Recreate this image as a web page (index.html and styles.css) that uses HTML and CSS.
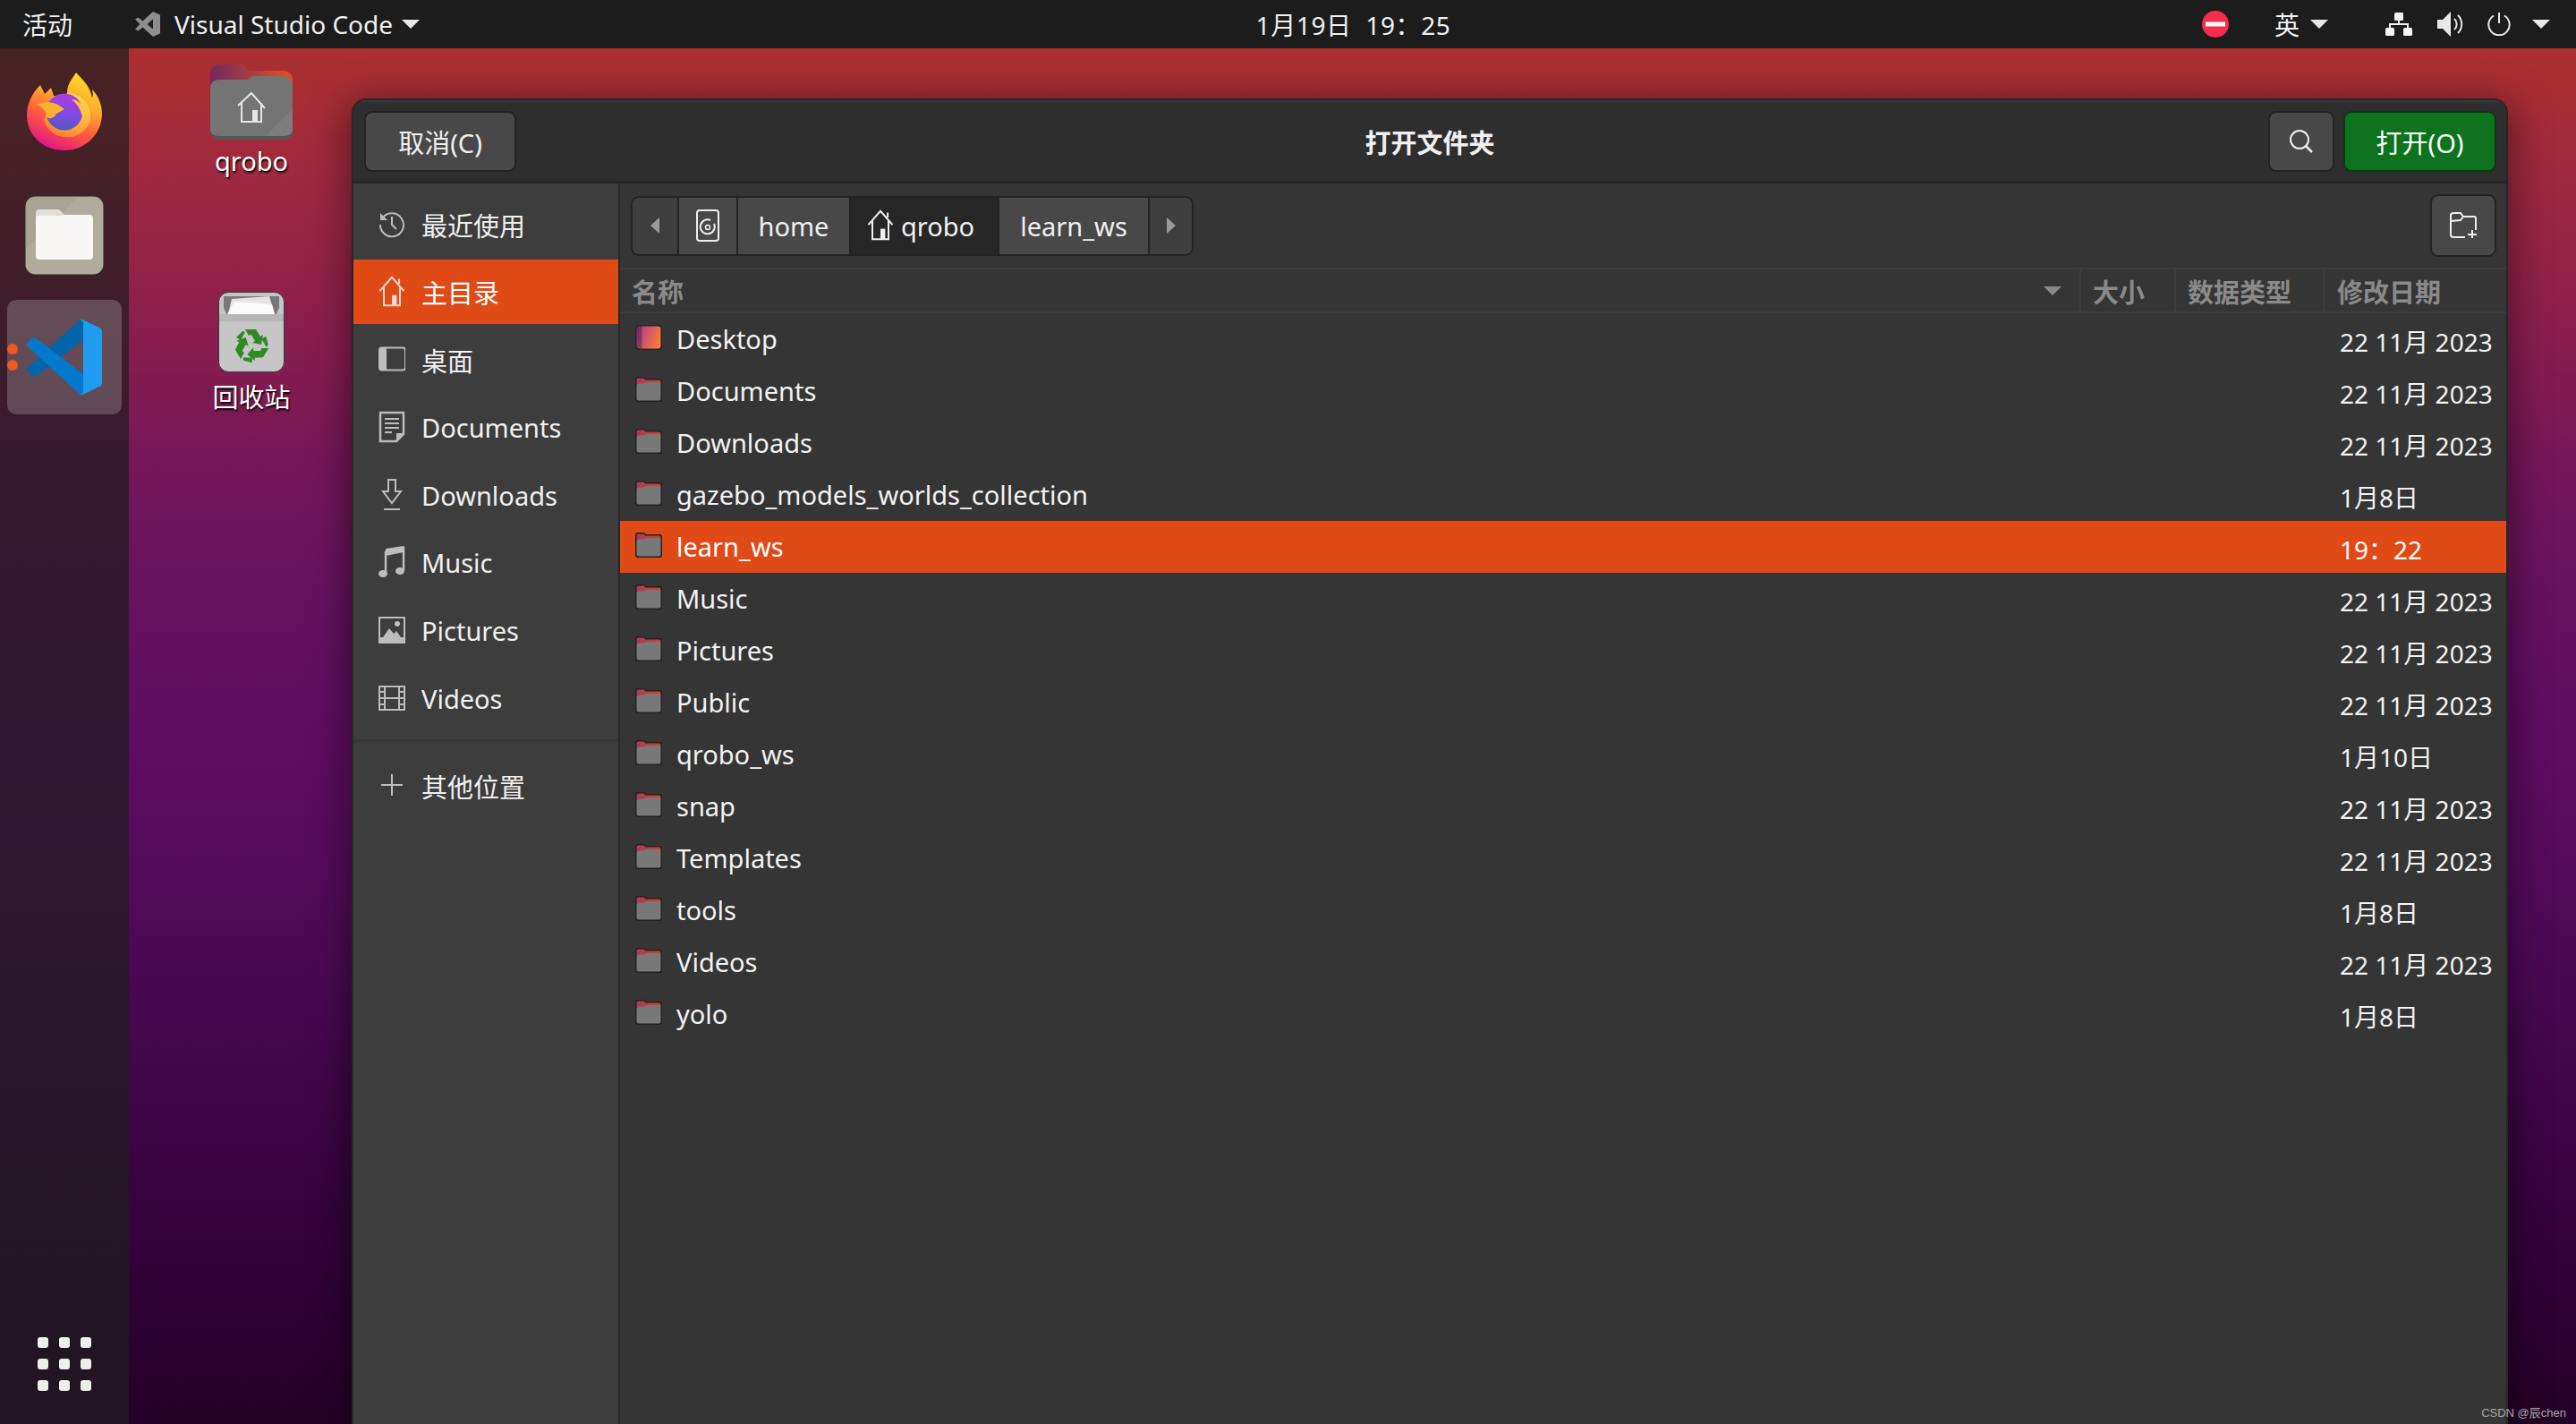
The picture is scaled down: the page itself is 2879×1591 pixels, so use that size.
FILE: index.html
```html
<!DOCTYPE html>
<html lang="zh">
<head>
<meta charset="utf-8">
<title>打开文件夹</title>
<link rel="stylesheet" href="styles.css">
</head>
<body>
<svg class="defs" width="0" height="0" aria-hidden="true">
  <defs>
    <linearGradient id="deskGrad" x1="0" y1="0" x2="1" y2="0.4"><stop offset="0" stop-color="#a8369a"/><stop offset="1" stop-color="#f5763a"/></linearGradient>
    <linearGradient id="folderTop" x1="0" y1="0" x2="1" y2="0"><stop offset="0" stop-color="#a93a5a"/><stop offset="1" stop-color="#cf4522"/></linearGradient>
    <linearGradient id="ffBase" x1="0.8" y1="0" x2="0.35" y2="1"><stop offset="0" stop-color="#ffe226"/><stop offset="0.38" stop-color="#ffa92e"/><stop offset="0.65" stop-color="#ff5f3a"/><stop offset="1" stop-color="#e31587"/></linearGradient>
    <linearGradient id="ffGlobe" x1="0.6" y1="0" x2="0.4" y2="1"><stop offset="0" stop-color="#b03ae0"/><stop offset="0.6" stop-color="#7a4ce0"/><stop offset="1" stop-color="#4a5ac0"/></linearGradient>
    <linearGradient id="ffInner" x1="0.9" y1="0" x2="0.2" y2="1"><stop offset="0" stop-color="#ffe04a"/><stop offset="1" stop-color="#ff7a30"/></linearGradient>
    <symbol id="folder" viewBox="0 0 30 30">
      <path d="M0 4a3 3 0 0 1 3-3h7l2 2h15a3 3 0 0 1 3 3v20a3 3 0 0 1-3 3H3a3 3 0 0 1-3-3z" fill="#222"/>
      <path d="M1.500 9V4.500a2 2 0 0 1 2-2h6l2 2h15a2 2 0 0 1 2 2V9z" fill="url(#folderTop)"/>
      <path d="M1.500 10.500a2 2 0 0 1 2-2h6l3-1.500h14a2 2 0 0 1 2 2v16.500a2 2 0 0 1-2 2H3.500a2 2 0 0 1-2-2z" fill="#787878"/>
    </symbol>
    <symbol id="deskicon" viewBox="0 0 30 30">
      <rect x="0" y="1" width="30" height="28" rx="4" fill="#242424"/>
      <rect x="1.500" y="2.500" width="27" height="25" rx="3" fill="url(#deskGrad)"/>
      <rect x="1.500" y="2.500" width="6" height="25" fill="#000" opacity=".28"/>
    </symbol>
    <symbol id="home" viewBox="0 0 32 40">
      <path d="M1 19 16 2l15 17M6 14v23h20V14M25 4v6" fill="none" stroke="currentColor" stroke-width="2.200"/>
      <rect x="16" y="24" width="6" height="13" fill="currentColor"/>
    </symbol>
    <symbol id="vscode" viewBox="0 0 100 100">
      <path d="M96.460 10.800 75.860.880a6.230 6.230 0 0 0-7.110 1.200L1.300 63.580a4.170 4.170 0 0 0 0 6.160l5.510 5.010a4.170 4.170 0 0 0 5.320.240L93.360 13.370c2.730-2.070 6.640-.120 6.640 3.300v-.240a6.250 6.250 0 0 0-3.540-5.630z" fill="#0065a9"/>
      <path d="M96.460 89.200 75.860 99.120a6.230 6.230 0 0 1-7.110-1.200L1.300 36.420a4.170 4.170 0 0 1 0-6.160l5.510-5.010a4.170 4.170 0 0 1 5.320-.240l81.230 61.620c2.730 2.070 6.640.120 6.640-3.300v.240a6.250 6.250 0 0 1-3.540 5.630z" fill="#007acc"/>
      <path d="M75.860 99.130a6.240 6.240 0 0 1-7.110-1.210c2.310 2.310 6.250.670 6.250-2.590V4.670c0-3.260-3.940-4.890-6.250-2.590a6.240 6.240 0 0 1 7.110-1.210l20.600 9.910A6.250 6.250 0 0 1 100 16.410v67.180a6.250 6.250 0 0 1-3.540 5.630z" fill="#1f9cf0"/>
    </symbol>
    <symbol id="caret" viewBox="0 0 20 10"><path d="M0 0h20L10 10z" fill="currentColor"/></symbol>
  </defs>
</svg>

<header class="topbar">
  <div class="top-left">
    <span class="activities">活动</span>
    <span class="app-menu">
      <svg class="app-glyph" viewBox="0 0 28 28"><path d="M20 0l8 3.500v21L20 28 8.500 17.500 3.500 21.500 0 19.500 5.500 14 0 8.500 3.500 6.500l5 4zM20 8.500l-6.500 5.500 6.500 5.500z" fill="#8d8d8d"/></svg>
      <span>Visual Studio Code</span>
      <svg class="caret"><use href="#caret"/></svg>
    </span>
  </div>
  <div class="clock">1月19日&nbsp; 19：25</div>
  <div class="top-right">
    <svg class="dnd" viewBox="0 0 30 30"><circle cx="15" cy="15" r="15" fill="#f52f4b"/><rect x="4" y="12.500" width="22" height="5" fill="#fff"/></svg>
    <span class="ime">英</span>
    <svg class="caret ime-caret"><use href="#caret"/></svg>
    <svg class="net" viewBox="0 0 30 26"><g fill="#f4f4f4"><rect x="10" y="0" width="10" height="9" rx="1.500"/><rect x="0" y="17" width="10" height="9" rx="1.500"/><rect x="20" y="17" width="10" height="9" rx="1.500"/></g><path d="M15 8v5M5 18v-5h20v5" fill="none" stroke="#f4f4f4" stroke-width="2"/></svg>
    <svg class="vol" viewBox="0 0 29 30"><path d="M0 10h6l9-9v28l-9-9H0z" fill="#e8e8e8"/><path d="M19 9a8 8 0 0 1 0 12M23 5a14 14 0 0 1 0 20" fill="none" stroke="#e8e8e8" stroke-width="2"/></svg>
    <svg class="pow" viewBox="0 0 26 26"><path d="M13 0v12M7 3.500a11.700 11.700 0 1 0 12 0" fill="none" stroke="#e8e8e8" stroke-width="2"/></svg>
    <svg class="caret last-caret"><use href="#caret"/></svg>
  </div>
</header>

<div class="screen">
  <nav class="dock">
    <div class="dock-apps">
      <div class="dock-item">
        <svg class="firefox" viewBox="0 0 84 87">
          <path d="M15 14C5 24 0 36 0 48c0 22 18 39 42 39s42-19 42-41c0-10-4-20-11-27 1 5 1 7 0 9C70 14 62 8 55 0c-5 8-11 14-10 26H30l-3-9-7 7z" fill="url(#ffBase)"/>
          <path d="M45 23c16 0 27 13 26 28-2 15-18 25-35 20-9-3-15-10-17-19z" fill="url(#ffInner)"/>
          <circle cx="42" cy="44" r="20.500" fill="url(#ffGlobe)"/>
          <path d="M11 36c9-4 20-5 31 5-3 2-5 3-9 5-2 5-8 7-12 3 2-5-2-9-10-13z" fill="#ffb02e"/>
          <path d="M50 30c11 1 18 12 13 24-2-12-6-18-13-24z" fill="#ffc83a"/>
        </svg>
      </div>
      <div class="dock-item">
        <svg class="files" viewBox="0 0 90 90">
          <rect x="0.500" y="0.500" width="89" height="89" rx="12" fill="#2c2a24"/>
          <rect x="1.500" y="1.500" width="87" height="87" rx="11" fill="#a8a392"/>
          <path d="M2 60 60 2h17a11 11 0 0 1 11 11v64a11 11 0 0 1-11 11H13A11 11 0 0 1 2 77z" fill="#b0ab9a"/>
          <path d="M13 20a4 4 0 0 1 4-4h22l6 6v20H13z" fill="#e2dfd6"/>
          <path d="M13 26a3 3 0 0 1 3-3h25l5-1h27a4 4 0 0 1 4 4v42a4 4 0 0 1-4 4H17a4 4 0 0 1-4-4z" fill="#f8f7f5"/>
        </svg>
      </div>
      <div class="dock-item active">
        <span class="run-dots"><i></i><i></i></span>
        <svg class="vs"><use href="#vscode"/></svg>
      </div>
    </div>
    <div class="app-grid"><i></i><i></i><i></i><i></i><i></i><i></i><i></i><i></i><i></i></div>
  </nav>

  <main class="desktop">
    <div class="desk-icon desk-home">
      <svg class="big-folder" viewBox="0 0 92 84">
        <defs><linearGradient id="bigTop" x1="0" y1="0" x2="1" y2="0"><stop offset="0" stop-color="#6f2a63"/><stop offset="1" stop-color="#e0521f"/></linearGradient></defs>
        <path d="M0 10a10 10 0 0 1 10-10h27l6 7h39a10 10 0 0 1 10 10v20H0z" fill="url(#bigTop)"/>
        <path d="M0 26a9 9 0 0 1 9-9h32l7-4h34a10 10 0 0 1 10 10v51a10 10 0 0 1-10 10H10A10 10 0 0 1 0 74z" fill="#747474"/>
        <path d="M92 50v24a10 10 0 0 1-10 10H58z" fill="#7d7d7d"/>
        <path d="M0 76a10 8 0 0 0 10 8h72a10 8 0 0 0 10-8v-2a10 6 0 0 1-10 6H10A10 6 0 0 1 0 74z" fill="#555"/>
        <g fill="none" stroke="#e6e6e6" stroke-width="2"><path d="M31 46l15-14 15 17M35 43v21h22V43"/></g>
        <rect x="47" y="51" width="6" height="13" fill="#e6e6e6"/>
      </svg>
      <span class="desk-label">qrobo</span>
    </div>
    <div class="desk-icon desk-trash">
      <svg class="trash" viewBox="0 0 74 90">
        <rect x="0.500" y="0.500" width="73" height="89" rx="11" fill="#c6c6c6" stroke="#3a3a3a"/>
        <path d="M6 5h62v13l-3 7H9L6 18z" fill="#787878"/>
        <path d="M11 25l4-17 42-3 6 20z" fill="#e4e4e4"/>
        <path d="M10 25l8-14 42 3 3 11z" fill="#fbfbfb"/>
        <rect x="1" y="25" width="72" height="8" fill="#b6b6b6"/>
        <g fill="#2e8a22" transform="translate(37 60)">
          <path id="recycleArm" d="M-7-18H5l5 8 3-2-2 11-10-2 3-2-4-7-3 1zM-10-16l3 1-5 9-5-3z"/>
          <use href="#recycleArm" transform="rotate(120)"/>
          <use href="#recycleArm" transform="rotate(240)"/>
        </g>
      </svg>
      <span class="desk-label">回收站</span>
    </div>

    <section class="window">
      <div class="win-header">
        <button class="btn cancel">取消(C)</button>
        <h1 class="win-title">打开文件夹</h1>
        <button class="btn search"><svg viewBox="0 0 28 28" class="ico28"><circle cx="12" cy="12" r="10" fill="none" stroke="#eee" stroke-width="2"/><path d="M19 19l7 7" stroke="#eee" stroke-width="2.500"/></svg></button>
        <button class="btn open">打开(O)</button>
      </div>
      <div class="win-body">
        <aside class="sidebar">
          <ul class="places">
            <li class="place"><svg class="pi" viewBox="0 0 30 30"><g fill="none" stroke="#bdbdbd" stroke-width="2"><path d="M5 8a13 13 0 1 1-3 8"/><path d="M15 7v9l5 5"/></g><path d="M2 3v8h8z" fill="#bdbdbd"/></svg><span>最近使用</span></li>
            <li class="place selected"><svg class="pi home-ico"><use href="#home"/></svg><span>主目录</span></li>
            <li class="place"><svg class="pi" viewBox="0 0 30 30"><rect x="1" y="2.500" width="29" height="25" rx="3" fill="none" stroke="#bdbdbd" stroke-width="2"/><path d="M1 5a3 3 0 0 1 3-3h5v26H4a3 3 0 0 1-3-3z" fill="#bdbdbd"/></svg><span>桌面</span></li>
            <li class="place"><svg class="pi" viewBox="0 0 30 36"><path d="M2 2h26v24l-8 8H2z" fill="none" stroke="#bdbdbd" stroke-width="2.500"/><path d="M7 9h16M7 14h16M7 19h16M7 24h8" stroke="#bdbdbd" stroke-width="2"/><path d="M20 34v-9h8z" fill="#bdbdbd"/></svg><span>Documents</span></li>
            <li class="place"><svg class="pi" viewBox="0 0 30 36"><path d="M11 1h8v13h6L15 27 5 14h6z" fill="none" stroke="#bdbdbd" stroke-width="2"/><path d="M6 34h18" stroke="#bdbdbd" stroke-width="2"/></svg><span>Downloads</span></li>
            <li class="place"><svg class="pi" viewBox="0 0 30 36"><path d="M8 30V7l20-5v25" fill="none" stroke="#bdbdbd" stroke-width="2.500"/><path d="M8 3l20-3v7L8 11z" fill="#bdbdbd"/><ellipse cx="5" cy="31" rx="5" ry="4" fill="#bdbdbd"/><ellipse cx="24" cy="28" rx="5" ry="4" fill="#bdbdbd"/></svg><span>Music</span></li>
            <li class="place"><svg class="pi" viewBox="0 0 30 30"><rect x="1" y="1" width="28" height="28" fill="none" stroke="#bdbdbd" stroke-width="2"/><path d="M1 23h28v7H1z" fill="#bdbdbd"/><path d="M5 23l7-10 5 6 3-3 5 7z" fill="#bdbdbd"/><circle cx="21" cy="8" r="3" fill="#bdbdbd"/></svg><span>Pictures</span></li>
            <li class="place"><svg class="pi" viewBox="0 0 30 30"><rect x="1" y="2" width="28" height="26" fill="none" stroke="#bdbdbd" stroke-width="2"/><path d="M7 2v26M23 2v26M7 15h16M1 8h6M1 15h6M1 22h6M23 8h6M23 15h6M23 22h6" stroke="#bdbdbd" stroke-width="2"/></svg><span>Videos</span></li>
          </ul>
          <div class="side-sep"></div>
          <div class="place other"><svg class="pi" viewBox="0 0 30 30"><path d="M15 3v24M3 15h24" stroke="#bdbdbd" stroke-width="2"/></svg><span>其他位置</span></div>
        </aside>
        <div class="content">
          <div class="pathbar-row">
            <div class="pathbar">
              <button class="crumb c-back"><svg class="tri" viewBox="0 0 10 18"><path d="M10 0v18L0 9z" fill="#9a9a9a"/></svg></button>
              <button class="crumb c-disk"><svg class="disk-ico" viewBox="0 0 26 36"><rect x="1" y="1" width="24" height="34" rx="3" fill="none" stroke="#eee" stroke-width="2"/><path d="M20 16a8 8 0 1 1-4-4" fill="none" stroke="#eee" stroke-width="2"/><circle cx="13" cy="20" r="2.500" fill="none" stroke="#eee" stroke-width="1.500"/></svg></button>
              <button class="crumb c-home">home</button>
              <button class="crumb c-current"><svg class="crumb-home"><use href="#home"/></svg>qrobo</button>
              <button class="crumb c-learn">learn_ws</button>
              <button class="crumb c-fwd"><svg class="tri" viewBox="0 0 10 18"><path d="M0 0v18L10 9z" fill="#9a9a9a"/></svg></button>
            </div>
            <button class="btn newfolder"><svg class="ico32" viewBox="0 0 32 30"><path d="M18 28H5a3 3 0 0 1-3-3V4a3 3 0 0 1 3-3h8l3 4h12a2 2 0 0 1 2 2v13M2 10l11-1 3-4" fill="none" stroke="#eee" stroke-width="2"/><path d="M26 20v9M21 25h10" stroke="#eee" stroke-width="2"/></svg></button>
          </div>
          <div class="col-head">
            <div class="col name">名称<svg class="sort"><use href="#caret"/></svg></div>
            <div class="col size">大小</div>
            <div class="col type">数据类型</div>
            <div class="col date">修改日期</div>
          </div>
          <ul class="files-list">
            <li class="file"><svg class="fi"><use href="#deskicon"/></svg><span class="fname">Desktop</span><span class="fdate">22 11月 2023</span></li>
            <li class="file"><svg class="fi"><use href="#folder"/></svg><span class="fname">Documents</span><span class="fdate">22 11月 2023</span></li>
            <li class="file"><svg class="fi"><use href="#folder"/></svg><span class="fname">Downloads</span><span class="fdate">22 11月 2023</span></li>
            <li class="file"><svg class="fi"><use href="#folder"/></svg><span class="fname">gazebo_models_worlds_collection</span><span class="fdate">1月8日</span></li>
            <li class="file selected"><svg class="fi"><use href="#folder"/></svg><span class="fname">learn_ws</span><span class="fdate">19：22</span></li>
            <li class="file"><svg class="fi"><use href="#folder"/></svg><span class="fname">Music</span><span class="fdate">22 11月 2023</span></li>
            <li class="file"><svg class="fi"><use href="#folder"/></svg><span class="fname">Pictures</span><span class="fdate">22 11月 2023</span></li>
            <li class="file"><svg class="fi"><use href="#folder"/></svg><span class="fname">Public</span><span class="fdate">22 11月 2023</span></li>
            <li class="file"><svg class="fi"><use href="#folder"/></svg><span class="fname">qrobo_ws</span><span class="fdate">1月10日</span></li>
            <li class="file"><svg class="fi"><use href="#folder"/></svg><span class="fname">snap</span><span class="fdate">22 11月 2023</span></li>
            <li class="file"><svg class="fi"><use href="#folder"/></svg><span class="fname">Templates</span><span class="fdate">22 11月 2023</span></li>
            <li class="file"><svg class="fi"><use href="#folder"/></svg><span class="fname">tools</span><span class="fdate">1月8日</span></li>
            <li class="file"><svg class="fi"><use href="#folder"/></svg><span class="fname">Videos</span><span class="fdate">22 11月 2023</span></li>
            <li class="file"><svg class="fi"><use href="#folder"/></svg><span class="fname">yolo</span><span class="fdate">1月8日</span></li>
          </ul>
        </div>
      </div>
    </section>
    <span class="watermark">CSDN @辰chen</span>
  </main>
</div>
</body>
</html>
```
FILE: styles.css
```css
* { box-sizing: border-box; }
html, body { margin: 0; height: 100%; }
body {
  width: 2879px; height: 1591px; overflow: hidden;
  display: flex; flex-direction: column;
  font-family: "Noto Sans", "Noto Sans CJK SC", sans-serif;
  font-size: 29px; color: #f0f0f0;
  background: linear-gradient(180deg,
    #ab2f2e 54px, #9f2840 200px, #8b1f4c 360px, #741757 515px, #651260 670px,
    #5f0d63 820px, #550b5c 975px, #470750 1130px, #3a0442 1284px, #2f0335 1440px, #240226 1591px);
}
ul { list-style: none; margin: 0; padding: 0; }
button { font: inherit; color: inherit; border: 0; padding: 0; background: none; }
.defs { position: absolute; }

.topbar {
  height: 54px; flex: none; background: #1c1c1c;
  display: grid; grid-template-columns: 1fr auto 1fr; align-items: center;
  font-size: 28px;
}
.top-left { display: flex; align-items: center; padding-left: 25px; }
.activities { margin-right: 70px; }
.app-menu { display: flex; align-items: center; }
.app-glyph { width: 28px; height: 28px; margin-right: 16px; }
.caret { width: 20px; height: 10px; color: #e8e8e8; margin-left: 10px; }
.clock { font-size: 28px; margin-left: 146px; letter-spacing: .6px; }
.top-right { display: flex; align-items: center; justify-content: flex-end; padding-right: 29px; }
.dnd { width: 30px; height: 30px; margin-right: 51px; }
.ime { margin-right: 2px; }
.ime-caret { margin-right: 64px; }
.net { width: 30px; height: 26px; margin-right: 28px; }
.vol { width: 29px; height: 30px; margin-right: 27px; }
.pow { width: 26px; height: 26px; }
.last-caret { margin-left: 24px; }

.screen { flex: 1; display: flex; min-height: 0; }
.dock {
  width: 144px; flex: none;
  background: rgba(30, 30, 30, .7);
  display: flex; flex-direction: column; justify-content: space-between; align-items: center;
  padding: 27px 0 37px;
}
.dock-apps { display: flex; flex-direction: column; align-items: center; }
.dock-item { width: 128px; height: 128px; display: flex; align-items: center; justify-content: center; position: relative; border-radius: 10px; }
.dock-item:first-child { height: 87px; margin-bottom: 50px; }
.dock-item:nth-child(2) { height: 90px; margin-bottom: 27px; }
.firefox { width: 84px; height: 87px; }
.files { width: 90px; height: 90px; }
.dock-item.active { background: rgba(255, 255, 255, .2); }
.vs { width: 84px; height: 84px; }
.run-dots { position: absolute; left: 0; top: 49px; display: flex; flex-direction: column; gap: 6px; }
.run-dots i { width: 12px; height: 12px; border-radius: 50%; background: #ee5a20; display: block; }
.app-grid { display: grid; grid-template-columns: repeat(3, 12px); grid-auto-rows: 12px; gap: 12px; }
.app-grid i { background: #eeeeec; border-radius: 3px; }

.desktop { flex: 1; position: relative; }
.desk-icon { position: absolute; display: flex; flex-direction: column; align-items: center; }
.desk-home { left: 77px; top: 18px; width: 120px; }
.desk-trash { left: 77px; top: 272px; width: 120px; }
.big-folder { width: 92px; height: 84px; }
.trash { width: 74px; height: 90px; }
.desk-label { color: #fff; text-shadow: 1px 2px 2px #000; margin-top: 4px; line-height: 40px; }
.desk-trash .desk-label { margin-top: 8px; }

.window {
  position: absolute; left: 249px; top: 56px; width: 2410px; bottom: -2px;
  border-radius: 16px 16px 0 0; overflow: hidden;
  background: #353535; border: 2px solid #262626; border-bottom: 0;
  box-shadow: 0 8px 46px rgba(0, 0, 0, .55);
  display: flex; flex-direction: column;
}
.win-header {
  height: 93px; flex: none; background: #2e2e2e; border-bottom: 3px solid #262626;
  border-top: 2px solid #3a3a3a;
  display: flex; align-items: center; padding: 0 13px 0 14px; gap: 14px;
  position: relative;
}
.btn { background: #484848; border-radius: 7px; box-shadow: 0 0 0 2px #232323; height: 64px; display: flex; align-items: center; justify-content: center; }
.cancel { width: 166px; }
.search { width: 70px; margin-left: auto; }
.open { width: 167px; background: #0e731e; box-shadow: 0 0 0 2px #0b3a12; color: #fff; }
.ico28 { width: 28px; height: 28px; }
.win-title { position: absolute; left: 0; right: 0; top: 0; bottom: 0; margin: 0; display: flex; align-items: center; justify-content: center; font-size: 29px; font-weight: 700; pointer-events: none; }

.win-body { flex: 1; display: flex; min-height: 0; }
.sidebar { width: 298px; flex: none; background: #3d3d3d; border-right: 2px solid #282828; padding-top: 9px; }
.places { display: flex; flex-direction: column; gap: 3.700px; }
.place { height: 72px; display: flex; align-items: center; padding: 0 0 0 28px; gap: 18px; color: #f0f0f0; }
.place > span { margin-top: 1px; }
.place.selected { background: #df4a16; color: #fff; }
.pi { width: 30px; height: 36px; flex: none; }
.home-ico { color: #fbd9c8; }
.side-sep { height: 3px; background: #363636; margin-top: 10px; }
.other { height: 97px; }

.content { flex: 1; min-width: 0; display: flex; flex-direction: column; }
.pathbar-row { height: 94px; flex: none; display: flex; align-items: center; justify-content: space-between; padding: 0 13px 0 12px; }
.pathbar { display: flex; height: 67px; border-radius: 9px; overflow: hidden; border: 2px solid #232323; background: #232323; gap: 2px; }
.crumb { background: #484848; display: flex; align-items: center; justify-content: center; }
.c-back { background: #3e3e3e; width: 50px; }
.c-disk { width: 64px; }
.c-home { width: 124px; }
.c-current { background: #272727; width: 164px; padding-right: 8px; }
.c-learn { width: 166px; }
.c-fwd { background: #3e3e3e; width: 47px; }
.tri { width: 10px; height: 18px; }
.disk-ico { width: 26px; height: 36px; }
.crumb-home { width: 30px; height: 36px; margin-right: 8px; }
.newfolder { width: 70px; height: 66px; }
.ico32 { width: 32px; height: 30px; }

.col-head {
  height: 51px; flex: none; display: flex; align-items: center;
  border-top: 2px solid #3d3d3d; border-bottom: 2px solid #3d3d3d;
  font-weight: 700; color: #8a8a8a;
}
.col { height: 100%; display: flex; align-items: center; padding-left: 13px; border-right: 2px solid #3d3d3d; }
.col.name { width: 1633px; padding-right: 20px; justify-content: space-between; }
.col.size { width: 106px; }
.col.type { width: 166px; }
.col.date { flex: 1; border-right: 0; padding-left: 14px; }
.sort { width: 20px; height: 10px; color: #8a8a8a; }

.files-list { flex: 1; }
.file { height: 58px; display: flex; align-items: center; padding-left: 17px; color: #f2f2f2; }
.file.selected { background: #df4a16; color: #fff; }
.fi { width: 30px; height: 30px; flex: none; margin-right: 16px; margin-top: -5px; }
.fname { flex: 1; margin-top: -1px; }
.fdate { width: 186px; flex: none; font-size: 28px; margin-top: 3px; }

.watermark { position: absolute; right: 11px; bottom: 4px; font-family: "Liberation Sans", "Noto Sans CJK SC", sans-serif; font-size: 13px; color: #a8a8a8; }
```
